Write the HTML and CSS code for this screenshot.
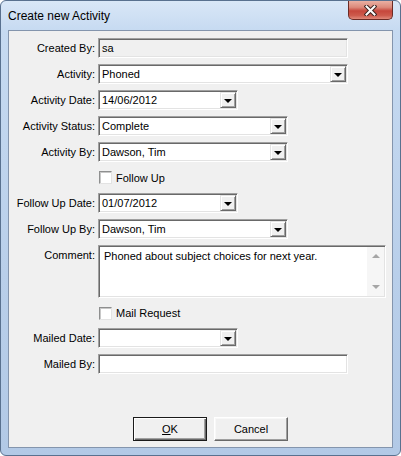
FILE: index.html
```html
<!DOCTYPE html>
<html lang="en">
<head>
  <meta charset="UTF-8" />
  <title>Create new Activity</title>
  <link rel="stylesheet" href="styles.css">
</head>
<body>

  <div class="window">
    <div class="titlebar">
      <span class="title">Create new Activity</span>
      <div class="close">
        <svg width="13" height="11" viewBox="0 0 13 11">
          <path d="M2.5 1.5 L10.5 9.5 M10.5 1.5 L2.5 9.5" stroke="#3b2420" stroke-width="4" stroke-linecap="square" fill="none"/>
          <path d="M2.5 1.5 L10.5 9.5 M10.5 1.5 L2.5 9.5" stroke="#fff" stroke-width="2" stroke-linecap="square" fill="none"/>
        </svg>
      </div>
    </div>

    <div class="client">
      <div class="form">
        <label>Created By:</label>
        <div class="field disabled w250"><span class="value">sa</span></div>

        <label>Activity:</label>
        <div class="field w250"><span class="value">Phoned</span><span class="drop"></span></div>

        <label>Activity Date:</label>
        <div class="field w140"><span class="value">14/06/2012</span><span class="drop"></span></div>

        <label>Activity Status:</label>
        <div class="field w190"><span class="value">Complete</span><span class="drop"></span></div>

        <label>Activity By:</label>
        <div class="field w190"><span class="value">Dawson, Tim</span><span class="drop"></span></div>

        <div class="check row-follow"><span class="box"></span>Follow Up</div>

        <label>Follow Up Date:</label>
        <div class="field w140"><span class="value">01/07/2012</span><span class="drop"></span></div>

        <label>Follow Up By:</label>
        <div class="field w190"><span class="value">Dawson, Tim</span><span class="drop"></span></div>

        <label class="top">Comment:</label>
        <div class="field memo">
          <span class="memo-text">Phoned about subject choices for next year.</span>
          <span class="scroll">
            <span class="arrow up"></span>
            <span class="arrow down"></span>
          </span>
        </div>

        <div class="check row-mail"><span class="box"></span>Mail Request</div>

        <label>Mailed Date:</label>
        <div class="field w140"><span class="value"></span><span class="drop"></span></div>

        <label>Mailed By:</label>
        <div class="field w250"><span class="value"></span></div>
      </div>

      <div class="buttons">
        <button class="default"><u>O</u>K</button>
        <button>Cancel</button>
      </div>
    </div>
  </div>

</body>
</html>
```

FILE: styles.css
```css
body {
  margin: 0;
  background: #fff;
  font-family: "Liberation Sans", Arial, sans-serif;
  font-size: 11px;
  color: #000;
}

.window {
  width: 401px;
  height: 456px;
  box-sizing: border-box;
  border: 1px solid #59718f;
  border-radius: 6px;
  padding: 0 7px 7px;
  background: linear-gradient(#d9e7f7, #c6daf1 30px, #b9cfea 60%, #b2c9e6);
  display: flex;
  flex-direction: column;
}

.titlebar {
  height: 29px;
  display: flex;
  justify-content: space-between;
  align-items: center;
}

.title {
  font-size: 12px;
  color: #000;
  padding-top: 1px;
}

.close {
  align-self: flex-start;
  width: 45px;
  height: 19px;
  box-sizing: border-box;
  border: 1px solid #6b2b25;
  border-top: none;
  border-radius: 0 0 5px 5px;
  background: linear-gradient(#eab0a3, #dc8a7b 35%, #c6473c 55%, #cd5a4c 80%, #e0897a);
  display: flex;
  align-items: center;
  justify-content: center;
}

.client {
  flex: 1;
  border: 1px solid #8495ad;
  background: #f0f0f0;
  display: flex;
  flex-direction: column;
}

.form {
  display: grid;
  grid-template-columns: 86px auto;
  column-gap: 3px;
  row-gap: 6px;
  justify-items: start;
  padding-top: 7px;
}

.form label {
  justify-self: end;
  line-height: 20px;
  white-space: nowrap;
}

.form label.top {
  align-self: start;
}

/* campo afundado no estilo clássico */
.field {
  height: 20px;
  box-sizing: border-box;
  border: 1px solid;
  border-color: #a0a0a0 #fff #fff #a0a0a0;
  box-shadow: inset 1px 1px #696969, inset -1px -1px #e3e3e3;
  padding: 1px;
  background: #fff;
  display: flex;
}

.field.disabled {
  background: #f0f0f0;
}

.w140 { width: 140px; }
.w190 { width: 190px; }
.w250 { width: 250px; }

.value {
  flex: 1;
  line-height: 16px;
  padding-left: 2px;
  white-space: nowrap;
}

.drop {
  width: 16px;
  height: 16px;
  box-sizing: border-box;
  border: 1px solid;
  border-color: #e3e3e3 #696969 #696969 #e3e3e3;
  box-shadow: inset 1px 1px #fff, inset -1px -1px #a0a0a0;
  background: #f0f0f0;
  display: flex;
  align-items: center;
  justify-content: center;
}

.drop::after {
  content: "";
  border-left: 4px solid transparent;
  border-right: 4px solid transparent;
  border-top: 4px solid #000;
  margin-top: 1px;
}

.memo {
  width: 288px;
  height: 53px;
}

.memo-text {
  flex: 1;
  padding: 2px 0 0 4px;
  line-height: 15px;
}

.scroll {
  width: 17px;
  background: #f6f6f6;
  display: flex;
  flex-direction: column;
  justify-content: space-between;
  align-items: center;
  padding: 7px 0 7px;
}

.arrow {
  border-left: 4px solid transparent;
  border-right: 4px solid transparent;
}

.arrow.up { border-bottom: 4px solid #a6a6a6; }
.arrow.down { border-top: 4px solid #a6a6a6; }

.check {
  grid-column: 2;
  display: flex;
  align-items: center;
  gap: 4px;
  padding-left: 1px;
}

.row-follow { height: 19px; }
.row-mail { height: 18px; }

.box {
  width: 13px;
  height: 13px;
  box-sizing: border-box;
  border: 1px solid;
  border-color: #8e8f8f #e3e3e3 #e3e3e3 #8e8f8f;
  box-shadow: inset 1px 1px #c8c8c8;
  background: #fff;
}

.buttons {
  margin-top: auto;
  display: flex;
  gap: 7px;
  padding: 0 0 6px 124px;
}

button {
  width: 74px;
  height: 24px;
  box-sizing: border-box;
  font-family: inherit;
  font-size: 11px;
  color: #000;
  background: #f0f0f0;
  border: 1px solid;
  border-color: #fff #696969 #696969 #fff;
  box-shadow: inset -1px -1px #a0a0a0, inset 1px 1px #f8f8f8;
  padding: 0;
}

button.default {
  border-color: #1a1a1a;
  box-shadow: inset 1px 1px #fff, inset -1px -1px #696969, inset -2px -2px #a0a0a0;
}
```
